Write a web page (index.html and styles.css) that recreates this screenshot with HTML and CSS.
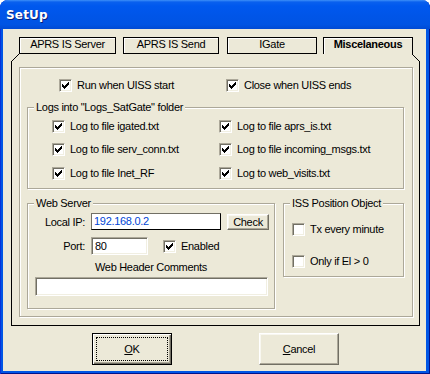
FILE: index.html
```html
<!doctype html>
<html lang="en">
<head>
    <meta charset="UTF-8">
    <meta name="viewport" content="width=device-width, initial-scale=1.0">
    <title>SetUp</title>
    <link rel="stylesheet" href="styles.css">
</head>
<body>
    <svg class="defs" width="0" height="0" aria-hidden="true">
        <symbol id="tick" viewBox="0 0 7 7">
            <path d="M6 0h1v1h-1zM5 1h2v1h-2zM0 2h1v1h-1zM4 2h3v1h-3zM0 3h2v1h-2zM3 3h3v1h-3zM0 4h5v1h-5zM1 5h3v1h-3zM2 6h1v1h-1z"/>
        </symbol>
    </svg>

    <div class="window">
        <div class="titlebar">SetUp</div>

        <div class="client">
            <div class="tabctl">
                <div class="tabstrip">
                    <div class="tab t1">APRS IS Server</div>
                    <div class="tab t2">APRS IS Send</div>
                    <div class="tab t3">IGate</div>
                    <div class="tab t4 active">Miscelaneous</div>
                </div>

                <div class="page">
                    <div class="frame">
                        <div class="row-top">
                            <label class="chk"><span class="box"><svg><use href="#tick"/></svg></span>Run when UISS start</label>
                            <label class="chk"><span class="box"><svg><use href="#tick"/></svg></span>Close when UISS ends</label>
                        </div>

                        <div class="group logs">
                            <span class="legend">Logs into "Logs_SatGate" folder</span>
                            <div class="checkgrid">
                                <label class="chk"><span class="box"><svg><use href="#tick"/></svg></span>Log to file igated.txt</label>
                                <label class="chk"><span class="box"><svg><use href="#tick"/></svg></span>Log to file aprs_is.txt</label>
                                <label class="chk"><span class="box"><svg><use href="#tick"/></svg></span>Log to file serv_conn.txt</label>
                                <label class="chk"><span class="box"><svg><use href="#tick"/></svg></span>Log to file incoming_msgs.txt</label>
                                <label class="chk"><span class="box"><svg><use href="#tick"/></svg></span>Log to file Inet_RF</label>
                                <label class="chk"><span class="box"><svg><use href="#tick"/></svg></span>Log to web_visits.txt</label>
                            </div>
                        </div>

                        <div class="bottom">
                            <div class="group web">
                                <span class="legend">Web Server</span>
                                <div class="field-row ip-row">
                                    <span class="lbl">Local IP:</span>
                                    <div class="field ip">192.168.0.2</div>
                                    <div class="btn small">Check</div>
                                </div>
                                <div class="field-row port-row">
                                    <span class="lbl">Port:</span>
                                    <div class="field port">80</div>
                                    <label class="chk"><span class="box"><svg><use href="#tick"/></svg></span>Enabled</label>
                                </div>
                                <div class="caption">Web Header Comments</div>
                                <div class="field comments"></div>
                            </div>

                            <div class="group iss">
                                <span class="legend">ISS Position Object</span>
                                <label class="chk"><span class="box"></span>Tx every minute</label>
                                <label class="chk"><span class="box"></span>Only if El &gt; 0</label>
                            </div>
                        </div>
                    </div>
                </div>
            </div>

            <div class="buttons">
                <div class="btn big default"><span class="focus"><u>O</u>K</span></div>
                <div class="btn big"><u>C</u>ancel</div>
            </div>
        </div>
    </div>
</body>
</html>
```

FILE: styles.css
```css
body {
    margin: 0;
    background: #fff;
    font-family: "Liberation Sans", Arial, sans-serif;
    font-size: 11px;
    letter-spacing: -0.3px;
    color: #000;
}

.defs {
    position: absolute;
}

.window {
    width: 430px;
    height: 374px;
    display: flex;
    flex-direction: column;
    background: #0055e5;
    border-radius: 8px 8px 0 0;
    box-shadow: inset 1px 0 #0831d9, inset -1px -1px #00138c;
    overflow: hidden;
}

.titlebar {
    height: 29px;
    flex: none;
    box-sizing: border-box;
    padding: 2px 0 0 6px;
    line-height: 27px;
    font-family: "DejaVu Sans", sans-serif;
    font-size: 12px;
    font-weight: bold;
    letter-spacing: 0.2px;
    color: #fff;
    text-shadow: 1px 1px #0a1e78;
    background: linear-gradient(#3d8ff8 0, #0a60ee 2px, #0058ee 6px, #0055e8 55%, #0054e3 85%, #004ad4 100%);
}

.client {
    flex: 1;
    margin: 0 4px 3px 3px;
    padding-top: 8px;
    background: #ece9d8;
}

/* tab control */

.tabctl {
    margin: 0 6px 0 8px;
}

.tabstrip {
    display: flex;
    height: 17px;
    padding-left: 8px;
}

.tab {
    box-sizing: border-box;
    height: 17px;
    border: 1px solid #000;
    box-shadow: inset 1px 1px #fff;
    text-align: center;
    line-height: 13px;
}

.t1 { width: 97px; }
.t2 { width: 96px; margin-left: 7px; }
.t3 { width: 90px; margin-left: 8px; }
.t4 { width: 90px; margin-left: 6px; }

.tab.active {
    border-bottom: none;
    font-weight: bold;
}

.page {
    height: 272px;
    box-sizing: border-box;
    padding: 13px 6px 0 8px;
    background:
        linear-gradient(135deg, transparent 45%, #000 45%, #000 55%, transparent 55%) 0 0 / 8px 8px no-repeat,
        linear-gradient(45deg, transparent 45%, #000 45%, #000 55%, transparent 55%) 100% 0 / 8px 8px no-repeat,
        linear-gradient(#000, #000) 0 7px / 1px 100% no-repeat,
        linear-gradient(#000, #000) 100% 7px / 1px 100% no-repeat,
        linear-gradient(#000, #000) 0 100% / 100% 1px no-repeat;
}

.frame {
    box-sizing: border-box;
    width: 394px;
    height: 250px;
    padding: 0 7px;
    border: 1px solid #aca899;
    box-shadow: 1px 1px 0 #fff, inset 1px 1px 0 #fff;
}

/* checkboxes */

.chk {
    display: flex;
    align-items: center;
    gap: 5px;
    height: 13px;
    line-height: 13px;
    white-space: nowrap;
}

.box {
    flex: none;
    box-sizing: border-box;
    width: 13px;
    height: 13px;
    display: flex;
    align-items: center;
    justify-content: center;
    background: #fff;
    border: 1px solid;
    border-color: #aca899 #fff #fff #aca899;
    box-shadow: inset 1px 1px #716f64, inset -1px -1px #f1efe2;
}

.box svg {
    width: 7px;
    height: 7px;
}

.row-top {
    display: grid;
    grid-template-columns: 167px auto;
    margin-top: 11px;
    padding-left: 32px;
}

/* group boxes */

.group {
    position: relative;
    box-sizing: border-box;
    border: 1px solid #aca899;
    box-shadow: 1px 1px 0 #fff, inset 1px 1px 0 #fff;
}

.legend {
    position: absolute;
    top: -7px;
    left: 6px;
    padding: 0 2px;
    line-height: 13px;
    background: #ece9d8;
    white-space: nowrap;
}

.logs {
    width: 377px;
    margin-top: 15px;
    padding: 12px 0 8px 24px;
}

.checkgrid {
    display: grid;
    grid-template-columns: 167px auto;
    grid-template-rows: 23px 24px 13px;
}

.bottom {
    display: flex;
    gap: 8px;
    margin-top: 14px;
}

.web {
    width: 248px;
    height: 106px;
}

.field-row {
    display: flex;
    align-items: center;
    gap: 6px;
}

.ip-row {
    margin-top: 9px;
}

.port-row {
    margin-top: 7px;
}

.lbl {
    width: 57px;
    text-align: right;
}

.field {
    box-sizing: border-box;
    background: #fff;
    border: 1px solid;
    border-color: #aca899 #fff #fff #aca899;
    box-shadow: inset 1px 1px #716f64, inset -1px -1px #f1efe2;
    padding-left: 3px;
    white-space: nowrap;
}

.ip {
    width: 130px;
    height: 17px;
    line-height: 15px;
    padding-left: 2px;
    color: #0046d5;
    border-color: #716f64 #000 #000 #716f64;
    box-shadow: none;
}

.port {
    width: 57px;
    height: 18px;
    line-height: 16px;
}

.port-row .chk {
    margin-left: 9px;
}

.caption {
    margin-top: 6px;
    line-height: 13px;
    text-align: center;
}

.comments {
    width: 233px;
    height: 19px;
    margin: 3px 0 0 7px;
}

.iss {
    width: 121px;
    height: 74px;
    padding: 19px 0 0 8px;
}

.iss .chk + .chk {
    margin-top: 19px;
}

/* push buttons */

.btn {
    box-sizing: border-box;
    display: flex;
    align-items: center;
    justify-content: center;
    border: 1px solid;
    border-color: #fff #716f64 #716f64 #fff;
    box-shadow: inset -1px -1px #aca899, inset 1px 1px #f8f7f0;
    background: #ece9d8;
}

.small {
    width: 42px;
    height: 16px;
}

.buttons {
    display: flex;
    gap: 87px;
    margin-top: 7px;
    padding-left: 89px;
}

.big {
    width: 80px;
    height: 32px;
}

.default {
    padding: 3px;
    border-color: #000;
    box-shadow: inset 1px 1px #fff, inset -1px -1px #716f64, inset -2px -2px #aca899;
}

.focus {
    flex: 1;
    align-self: stretch;
    display: flex;
    align-items: center;
    justify-content: center;
    border: 1px dotted #000;
}
```
